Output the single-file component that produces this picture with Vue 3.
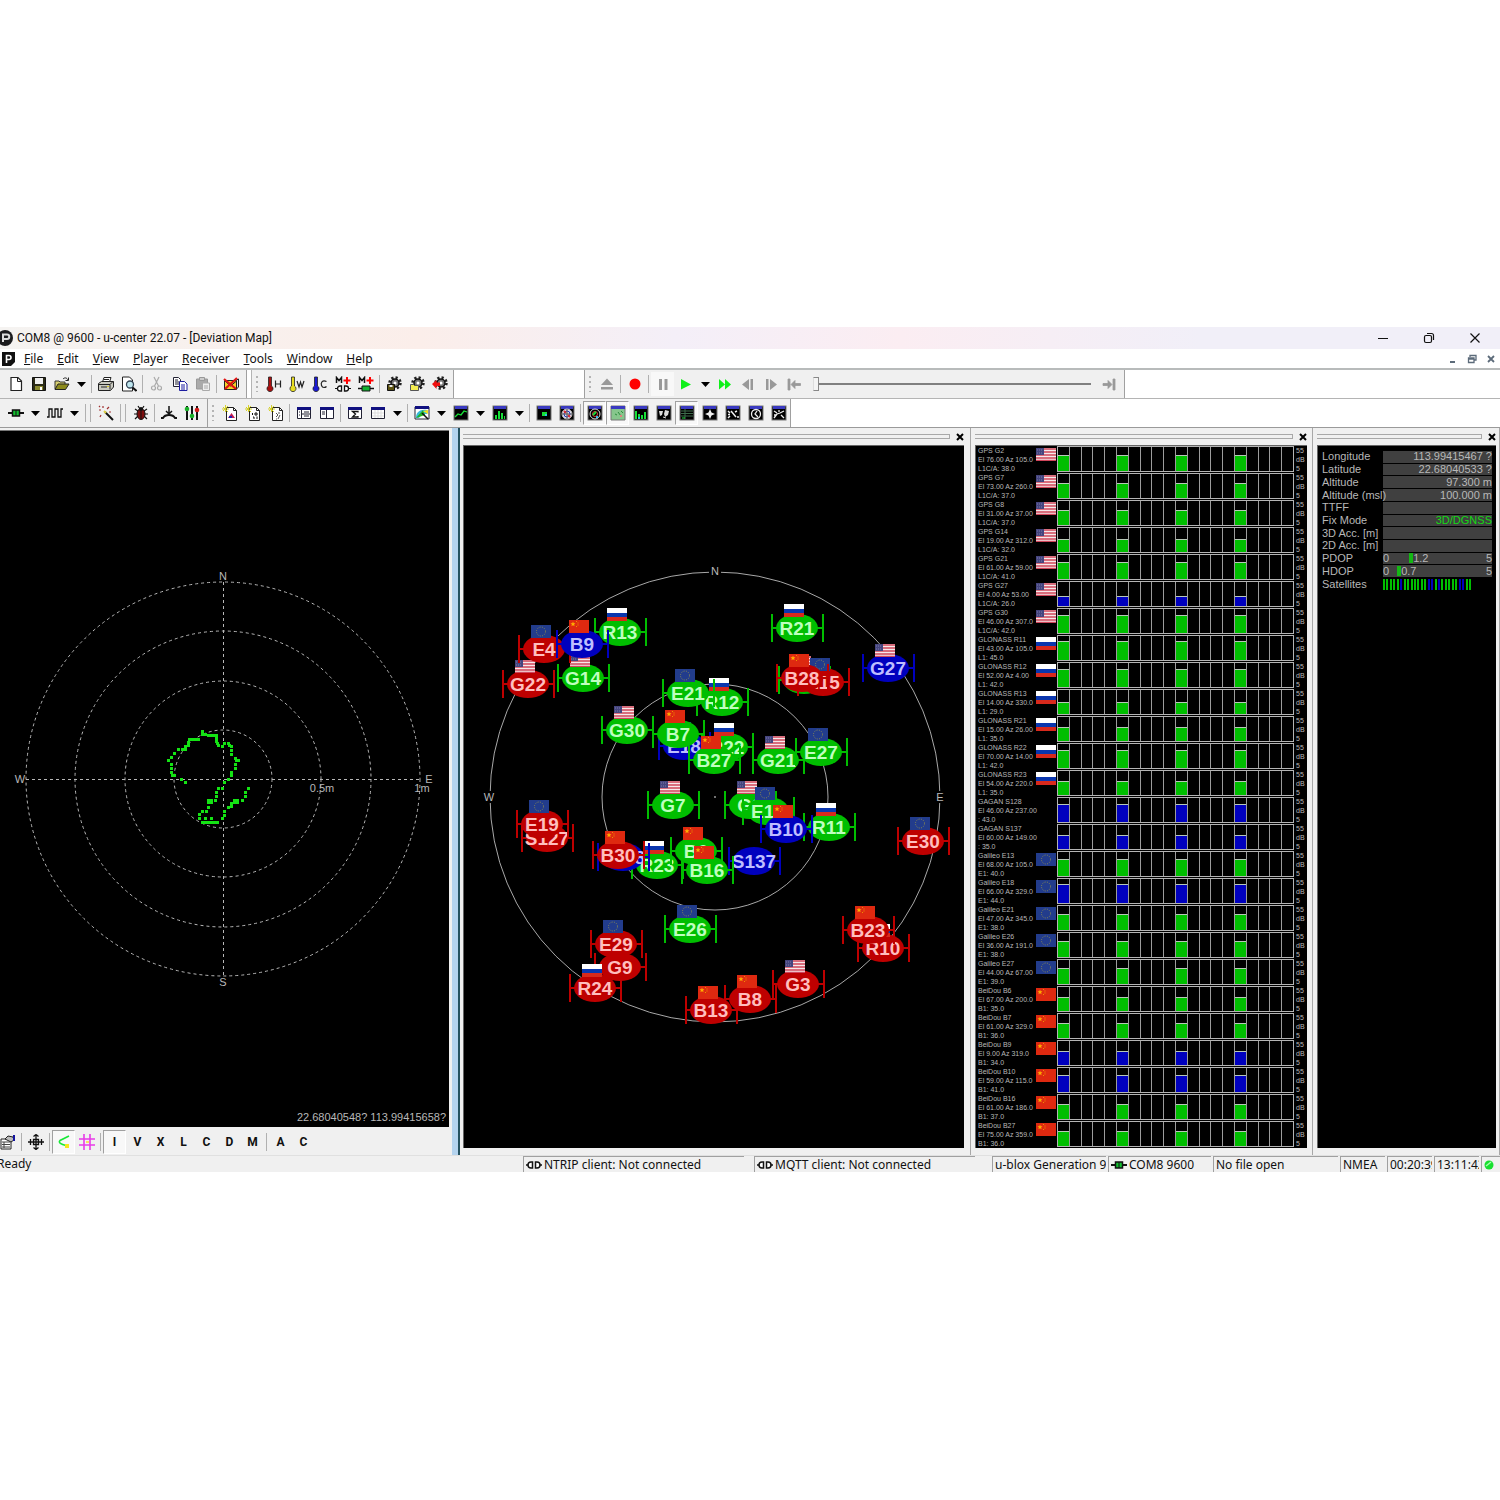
<script setup>
const svgWin = (inner) => `<rect x="1" y="1" width="14" height="14" fill="#000" stroke="#777" stroke-width="1"/><rect x="2" y="1" width="12" height="3" fill="#3a3ac0"/>${inner}`
const paneWin = (inner) => `<path d="M1.500 2.500h13v11h-13z" fill="#fff" stroke="#223"/><path d="M1 2h14v3h-14z" fill="#101080"/>${inner}`
const gear = '<circle cx="9" cy="7" r="5.500" fill="none" stroke="#222" stroke-width="2.500" stroke-dasharray="2.200 2.100"/><circle cx="9" cy="7" r="4" fill="#777" stroke="#111" stroke-width="1.500"/><circle cx="9" cy="7" r="1.500" fill="#fff"/>'
const thermo = (c, letter) => `<path d="M2.500 1h3v9a3 3 0 1 1-3 0z" fill="${c}" stroke="#222" stroke-width=".8"/><path d="${letter}" fill="none" stroke="#222" stroke-width="1.200"/>`
const memory = '<path d="M1.500 7V1.500l2.500 3 2.500-3V7" fill="none" stroke="#111" stroke-width="1.500"/><path d="M12 1v7M8.500 4.500h7" stroke="#f00" stroke-width="2"/>'
const logDoc = '<path d="M4.500 2.500h7l3 3v10h-10z" fill="#fff" stroke="#222"/><path d="M11.500 2.500v3h3" fill="none" stroke="#222"/><path d="M1 2l5 5M6 1L1 6M3.500 0v7M0 4h7" stroke="#d5d12a" stroke-width="1"/>'

const icons = {
  newDoc: '<path d="M3 1.500h7l3.500 3.500v9.500H3z" fill="#fff" stroke="#222" stroke-width="1.200"/><path d="M9.500 1.500v4h4" fill="none" stroke="#222"/>',
  save: '<path d="M1.500 1.500h13v13h-13z" fill="#2b2b16" stroke="#111"/><path d="M4 2h8v6h-8z" fill="#eee"/><path d="M4 10h8v4h-8z" fill="#8a8a30"/><path d="M9 11h2v3h-2z" fill="#fff"/>',
  open: '<path d="M1 13V5h4l1 1h5v2" fill="#d8d070" stroke="#333"/><path d="M1 13.500l3-5.500h11l-3.500 5.500z" fill="#8c8a1c" stroke="#222"/><path d="M9 3c2-2 4-1 5 1M14.500 1.500v3h-3" fill="none" stroke="#222"/>',
  print: '<path d="M4.500 6l1.500-4.500h7L11.500 6z" fill="#fff" stroke="#222"/><path d="M.5 7.500l3-2h12V11l-3 3.500H.5z" fill="#c9c9c0" stroke="#222"/><path d="M1 8.500h11v5M12 8.500l3-3M3 11h6M6 3.500h5" stroke="#222" fill="none"/><path d="M9 10h2v1h-2z" fill="#d4c822"/>',
  preview: '<path d="M1.500 1h7l3 3v11h-10z" fill="#fff" stroke="#222"/><circle cx="9" cy="8.500" r="3.500" fill="#bfe6ee" stroke="#345" stroke-width="1.300"/><path d="M11.500 11.500l4 3.500" stroke="#111" stroke-width="2"/>',
  cut: '<path d="M5 1l4.500 9M10 1L5.500 10" stroke="#aaa" stroke-width="1.200"/><circle cx="4.500" cy="12" r="2" fill="none" stroke="#aaa" stroke-width="1.200"/><circle cx="10.500" cy="12" r="2" fill="none" stroke="#aaa" stroke-width="1.200"/>',
  copy: '<path d="M1.500 1.500h5l2 2v7h-7z" fill="#fff" stroke="#223"/><path d="M3 4h3M3 6h4M3 8h4" stroke="#223"/><path d="M7.500 5.500h5l2.500 2.500v6.500h-7.500z" fill="#fff" stroke="#1c1ca0"/><path d="M9 9h4M9 11h4M9 13h4" stroke="#1c1ca0"/>',
  paste: '<path d="M1.500 3h11v10h-11z" fill="#aaa" stroke="#999"/><path d="M4.500 1.500h5v3h-5z" fill="#ccc" stroke="#999"/><path d="M7.500 7h7v7.500h-7z" fill="#eee" stroke="#aaa"/><path d="M9 10h4M9 12h4" stroke="#aaa"/>',
  mail: '<path d="M1.500 4.500h12v9h-12z" fill="#f5d327" stroke="#222"/><path d="M2 5l5.500 5 6-5M13.500 4l2-1v8l-2 2" fill="none" stroke="#222"/><path d="M1 3l12 10M14 2L2 13" stroke="#e01414" stroke-width="2.200"/>',
  hot: thermo('#a80f0f', 'M9.500 4.500v7M14.500 4.500v7M9.500 8h5'),
  warm: thermo('#e6dc20', 'M8 5l2 6 1.500-5 1.500 5 2-6'),
  cold: thermo('#1a1ad0', 'M14.500 5.500c-4-2-6 1-5 4s4 2 5 1'),
  memOff: memory + '<path d="M0 12.500h2M14 12.500h2" stroke="#111"/><path d="M6.500 10H5a2.500 2.500 0 0 0 0 5h1.500zM9.500 10H11a2.500 2.500 0 0 1 0 5H9.500z" fill="#fff" stroke="#111" stroke-width="1.300"/>',
  memOn: memory + '<path d="M0 12.500h16" stroke="#111" stroke-width="1.500"/><path d="M4 10h8v5h-8z" fill="#12b030" stroke="#111"/>',
  gearSave: gear + '<path d="M1.500 8.500h7v6h-7z" fill="#5c5310" stroke="#111"/><path d="M3.500 9h3v2h-3z" fill="#eee"/>',
  gearOpen: gear + '<path d="M1.500 8.500h3l1 1h4v5h-8z" fill="#f4ec50" stroke="#555"/>',
  gearRed: gear + '<path d="M0 8l4.500-4v2.500H8v3.500H4.500v3z" fill="#f01010"/>',
  eject: '<path d="M2 9l6-6.500L14 9zM2 11h12v2.500H2z" fill="#999"/>',
  record: '<circle cx="8" cy="8" r="5.500" fill="#f00"/>',
  pause: '<path d="M4 3h3v11H4zM9.500 3h3v11h-3z" fill="#999"/>',
  play: '<path d="M3 3l10 5.500L3 13.500z" fill="#0ff01a"/>',
  forward: '<path d="M2 3l6 5.500L2 13.500zM8 3l6 5.500-6 5z" fill="#0ff01a"/>',
  stepBack: '<path d="M9 3v11L2 8.500zM10.500 3h2.500v11h-2.500z" fill="#999"/>',
  stepNext: '<path d="M7 3v11l7-5.500zM3 3h2.500v11H3z" fill="#999"/>',
  toStart: '<path d="M2 3h2v11H2zM5 8.500l4-4v3h5.500v2H9v3z" fill="#999" stroke="#999" stroke-width=".8"/>',
  toEnd: '<path d="M12 3h2v11h-2zM11 8.500l-4-4v3H2v2h5v3z" fill="#999" stroke="#999" stroke-width=".8"/>',
  connect: '<path d="M0 8h16" stroke="#111" stroke-width="2"/><path d="M4.500 5h7v6h-7z" fill="#12c030" stroke="#111" stroke-width="1.500"/><path d="M8 5v6" stroke="#111"/>',
  wave: '<path d="M0 12h2V4h3v8h3V4h3v8h3V4h2" fill="none" stroke="#111" stroke-width="1.300"/>',
  wand: '<path d="M7 7l8 8" stroke="#111" stroke-width="2"/><path d="M5 1v2M1 5h2M9 4l2-2M3 10l-1 2M1 1l1 1M11 7h2" stroke="#a03030" stroke-width="1.200"/><path d="M6 6l2 2" stroke="#e0d040" stroke-width="2"/>',
  bug: '<path d="M2 4l3 2M14 4l-3 2M1 9h14M2 14l3-3M14 14l-3-3M5 1l2 3M11 1L9 4" stroke="#111" stroke-width="1.200"/><ellipse cx="8" cy="9" rx="4" ry="5.500" fill="#7c0d0d" stroke="#111"/><circle cx="8" cy="4" r="2" fill="#111"/><path d="M8 6v8" stroke="#111"/>',
  base: '<path d="M8 1v8M5 6l3 3 3-3" fill="none" stroke="#111" stroke-width="1.500"/><path d="M0 13h2c2-4 10-4 12 0h2" fill="none" stroke="#111" stroke-width="1.800"/>',
  sliders: '<path d="M3 1v14M8 1v14M13 1v14" stroke="#111" stroke-width="2"/><circle cx="3" cy="4" r="2.300" fill="#18b028"/><circle cx="8" cy="11" r="2.300" fill="#18b028"/><circle cx="13" cy="5" r="2.300" fill="#d01818"/>',
  logImage: logDoc + '<path d="M6 13l3.500-5 3.500 5z" fill="#c01850"/><path d="M7 11h3v2H7z" fill="#2020b0"/>',
  logBits: logDoc + '<path d="M7.500 8v2M10 8h2v2h-2zM8 12h1v2M12 11.500v2.500" fill="none" stroke="#111"/>',
  logText: logDoc + '<path d="M8 8l2 2-2 2M11 7v2M12 10l-2 4M8 14h1" fill="none" stroke="#555"/>',
  paneList: paneWin('<path d="M5.500 5v8M6 9h8M8 7h5M8 11h5M3 7h1M3 10h1" stroke="#223"/>'),
  paneText: paneWin('<path d="M7.500 5v8M3 7h3M3 9h3" stroke="#223"/>'),
  sum: paneWin('<path d="M11 7.500V6.500H5.500L8.500 9 5.500 12H11v-1" fill="none" stroke="#111" stroke-width="1.300"/>'),
  grid: paneWin('<path d="M5 5v8M8 5v8M11 5v8M2 8h12M2 11h12" stroke="#ddd"/>'),
  gauge: '<path d="M1 2h14v12H1z" fill="#fff" stroke="#223"/><path d="M1 1h14v3H1z" fill="#101080"/><path d="M2 13c0-6 4-9 11-8v4H8l-3 4z" fill="#38b8d8"/><path d="M2 13L9 5l2 5z" fill="#21b421"/><path d="M9 6l5-1v4z" fill="#f4e020"/><path d="M8 8l6 6" stroke="#111" stroke-width="1.500"/>',
  lineChart: svgWin('<path d="M2 12l3-3 3 1 3-4 3 1" fill="none" stroke="#18e038" stroke-width="1.300"/>'),
  histogram: svgWin('<path d="M3 14v-4h2v4zM6 14V6h2v8zM9 14V8h2v6zM12 14v-3h1v3z" fill="#18e038"/>'),
  mapDot: svgWin('<path d="M6 7h5v4H6z" fill="#18e038"/><path d="M9 9h2v2H9z" fill="#28c8e0"/>'),
  skyIcon: svgWin('<circle cx="8" cy="9" r="5" fill="#dde" stroke="#bbb"/><circle cx="8" cy="9" r="3" fill="none" stroke="#2030c0"/><path d="M5 6l2 2M11 12l-2-2" stroke="#e03030" stroke-width="2"/><path d="M8 4v10M3 9h10" stroke="#555"/>'),
  sky2: svgWin('<circle cx="8" cy="9" r="5" fill="none" stroke="#ddd"/><circle cx="8" cy="9" r="2.500" fill="none" stroke="#e04040"/><path d="M6 10l3-3" stroke="#18e038" stroke-width="1.800"/><path d="M9 11h2v2H9z" fill="#38b8f0"/>'),
  signal2: '<path d="M1 1h14v14H1z" fill="#86c68c" stroke="#777"/><path d="M1 1h14v3H1z" fill="#3a3ac0"/><path d="M8 7l3 4M5 9l2 1M11 6l2 2" stroke="#2c8c3c"/><path d="M10 10h2v2h-2z" fill="#e08080"/>',
  bars2: svgWin('<path d="M2 14V6h2v8zM5 14V9h2v5zM8 14v-4h2v4zM11 14V7h2v7z" fill="#18e038"/><path d="M5 12h2v2H5z" fill="#28c8e0"/>'),
  world: svgWin('<path d="M3 6h4l-1 4-2 1zM9 5l4 1-1 4-3 2-1-3z" fill="#ddd"/><path d="M7 12l3 1" stroke="#ddd"/>'),
  dataView: svgWin('<path d="M2 6h12M2 8.500h12M2 11h12M6 4v10" stroke="#3d6a4a"/><path d="M3 13h3" stroke="#18e038"/>'),
  compass: svgWin('<path d="M8 4l1.500 3.500L13 9l-3.500 1.500L8 14l-1.500-3.500L3 9l3.500-1.500z" fill="#eee"/>'),
  speed: svgWin('<path d="M3 13l2-2M3 6l2 2M12 6l-2 1M6 6l5 6M12 12h2M3 9.500h2" stroke="#eee" stroke-width="1.500"/>'),
  clock: svgWin('<circle cx="8" cy="9" r="4.500" fill="none" stroke="#eee" stroke-width="1.300"/><path d="M9 6L7 9l3 3" fill="none" stroke="#eee" stroke-width="1.300"/>'),
  altitude: svgWin('<path d="M3 13l3-4 3-1 4-2M3 6l3 2M10 10l3 3M8 5v2M3 10h2" fill="none" stroke="#eee" stroke-width="1.300"/>'),
  props: '<path d="M1 5h10v10H1z" fill="#fff" stroke="#222"/><path d="M2 8h8M2 10.500h8M2 13h8M4 8v6" stroke="#444"/><path d="M5 5l3-3 5 1 1 3-3 2z" fill="#bbb" stroke="#222"/><path d="M13 1h2v6h-2z" fill="#1414a0"/>',
  move: '<path d="M8 0v16M0 8h16M5.500 2.500L8 .5l2.500 2M5.500 13.500l2.500 2 2.500-2M2.500 5v6M13.500 5v6M5.500 5.500h5v5h-5z" fill="none" stroke="#111" stroke-width="1.300"/>',
  track: '<path d="M13 2L4 6.500c-2 2 1 4 6 5" fill="none" stroke="#18e838" stroke-width="1.600"/><path d="M9 10h4v4H9z" fill="#f4e820"/>',
  hash: '<path d="M5 0v16M11 0v16M0 5h16M0 11h16" stroke="#e83ae8" stroke-width="1.600"/><path d="M7 7h3v2H7z" fill="#f8e060"/>',
  unplugged: '<path d="M0 8h2M14 8h2" stroke="#111" stroke-width="1.500"/><path d="M6.500 5H5a3 3 0 0 0 0 6h1.500zM9.500 5H11a3 3 0 0 1 0 6H9.500z" fill="#fff" stroke="#111" stroke-width="1.500"/>'
}

const b = (icon, label, pressed = false) => ({ t: 'b', icon, label, pressed })
const drop = (label) => ({ t: 'd', label })
const sep = { t: 's' }
const dbl = { t: 'ss' }

const fileBar = [b('newDoc', 'New'), b('save', 'Save'), b('open', 'Open'), drop('Recent files'), sep, b('print', 'Print'), b('preview', 'Print preview'), sep, b('cut', 'Cut'), b('copy', 'Copy'), b('paste', 'Paste'), sep, b('mail', 'Clear messages')]
const actionBar = [b('hot', 'Hotstart'), b('warm', 'Warmstart'), b('cold', 'Coldstart'), b('memOff', 'Memory disconnect'), b('memOn', 'Memory connect'), sep, b('gearSave', 'Save configuration'), b('gearOpen', 'Load configuration'), b('gearRed', 'Revert configuration')]
const playerBar = [b('eject', 'Eject'), sep, b('record', 'Record'), sep, b('pause', 'Pause', true), b('play', 'Play'), drop('Play speed'), b('forward', 'Fast forward'), b('stepBack', 'Step back'), b('stepNext', 'Step forward'), b('toStart', 'Go to start')]
const connBar = [b('connect', 'Connect'), drop('Port'), b('wave', 'Baudrate'), drop('Baudrate list'), dbl, b('wand', 'Autobauding'), dbl, b('bug', 'Debug messages'), sep, b('base', 'Base station'), b('sliders', 'Settings')]
const viewBar = [b('logImage', 'Packet console'), b('logBits', 'Binary console'), b('logText', 'Text console'), sep, b('paneList', 'Messages view'), b('paneText', 'Configuration view'), sep, b('sum', 'Statistic view'), b('grid', 'Table view'), drop('Table list'), sep, b('gauge', 'Map'), drop('Map list'), b('lineChart', 'Chart view'), drop('Chart list'), b('histogram', 'Histogram view'), drop('Histogram list'), sep, b('mapDot', 'Deviation map'), b('skyIcon', 'Sky view'), sep, b('sky2', 'Satellite position', true), b('signal2', 'Satellite signal history', true), b('bars2', 'Satellite level'), b('world', 'World position'), b('dataView', 'Data view', true), b('compass', 'Compass'), b('speed', 'Speedometer'), b('clock', 'Clock'), b('altitude', 'Altitude meter')]
const menus = ['File', 'Edit', 'View', 'Player', 'Receiver', 'Tools', 'Window', 'Help']
const letters = ['I', 'V', 'X', 'L', 'C', 'D', 'M']

const rings = [49, 98, 148, 197]
const trail = [
  [-21, -48], [-21, -45], [-18, -45], [-15, -44], [-12, -44], [-9, -44], [-7, -44], [-7, -41], [-7, -38], [-6, -36], [-5, -34], [-1, -33], [1, -36], [5, -36], [6, -34], [8, -33], [8, -29], [8, -25], [12, -21], [13, -19], [15, -19], [12, -15], [12, -11], [8, -7], [8, -4], [5, 0], [1, 3], [-1, 9], [-5, 9], [-7, 13], [-7, 17], [-8, 21], [-15, 28], [-17, 32], [-21, 32], [-24, 35], [-24, 39], [-18, 39], [-12, 39], [-21, 43], [-18, 43], [-15, 43], [-12, 43], [-9, 43], [-6, 43], [-1, 39], [1, 36], [1, 32], [5, 28], [8, 27], [8, 24], [19, 21], [22, 17], [22, 13], [25, 9],
  [-25, -40], [-28, -40], [-31, -40], [-34, -40], [-35, -37], [-35, -34], [-38, -33], [-38, -30], [-41, -30], [-45, -30], [-49, -26], [-52, -22], [-55, -19], [-52, -15], [-52, -11], [-52, -7], [-51, -4], [-49, -4], [-42, 0], [-38, 3]
]
const clusters = [[-13, 23], [13, 23]]

const sats = [
  ['G2', 750, 805, 'g'], ['G3', 798, 984, 'r'], ['G7', 673, 805, 'g'], ['G8', 804, 680, 'g'], ['G9', 620, 967, 'r'], ['G14', 583, 678, 'g'], ['G21', 778, 760, 'g'], ['G22', 528, 684, 'r'], ['G27', 888, 668, 'b'], ['G30', 627, 730, 'g'],
  ['R10', 883, 948, 'r'], ['R11', 829, 827, 'g'], ['R12', 722, 702, 'g'], ['R13', 620, 632, 'g'], ['R21', 797, 628, 'g'], ['R22', 727, 747, 'g'], ['R23', 657, 865, 'g'], ['R24', 595, 988, 'r'],
  ['S127', 547, 838, 'r'], ['S128', 623, 857, 'b'], ['S137', 754, 861, 'b'],
  ['E4', 544, 649, 'r'], ['E13', 768, 811, 'g'], ['E15', 823, 682, 'r'], ['E18', 684, 746, 'b'], ['E19', 542, 824, 'r'], ['E21', 688, 693, 'g'], ['E26', 690, 929, 'g'], ['E27', 821, 752, 'g'], ['E29', 616, 944, 'r'], ['E30', 923, 841, 'r'],
  ['B6', 696, 851, 'g'], ['B7', 678, 734, 'g'], ['B8', 750, 999, 'r'], ['B9', 582, 644, 'b'], ['B10', 786, 829, 'b'], ['B13', 711, 1010, 'r'], ['B16', 707, 870, 'g'], ['B23', 868, 930, 'r'], ['B27', 714, 760, 'g'], ['B28', 802, 678, 'r'], ['B30', 618, 855, 'r']
].map(([id, x, y, tone]) => ({ id, x: x - 715, y: y - 797, tone, flag: flagOf(id) }))

function flagOf(id) {
  return { G: 'us', R: 'ru', E: 'eu', B: 'cn' }[id[0]]
}

const systems = { G: ['GPS', 'L1C/A'], R: ['GLONASS', 'L1'], S: ['GAGAN', ''], E: ['Galileo', 'E1'], B: ['BeiDou', 'B1'] }
const signals = [
  ['G2', '76.00', '105.0', 38], ['G7', '73.00', '260.0', 37], ['G8', '31.00', '37.00', 37], ['G14', '19.00', '312.0', 32], ['G21', '61.00', '59.00', 41], ['G27', '4.00', '53.00', 26, 1], ['G30', '46.00', '307.0', 42],
  ['R11', '43.00', '105.0', 45], ['R12', '52.00', '4.00', 42], ['R13', '14.00', '330.0', 29], ['R21', '15.00', '26.00', 35], ['R22', '70.00', '14.00', 42], ['R23', '54.00', '220.0', 35],
  ['S128', '46.00', '237.00', 43, 1], ['S137', '60.00', '149.00', 35, 1],
  ['E13', '68.00', '105.0', 40], ['E18', '66.00', '329.0', 44, 1], ['E21', '47.00', '345.0', 38], ['E26', '36.00', '191.0', 38], ['E27', '44.00', '67.00', 39],
  ['B6', '67.00', '200.0', 35], ['B7', '61.00', '329.0', 36], ['B9', '9.00', '319.0', 34, 1], ['B10', '59.00', '115.0', 41, 1], ['B16', '61.00', '186.0', 37], ['B27', '75.00', '359.0', 36]
].map(([id, el, az, level, blue]) => ({
  id,
  name: `${systems[id[0]][0]} ${id}`,
  angle: `El ${el} Az ${az}`,
  reading: `${systems[id[0]][1]}: ${level}.0`,
  height: (level - 5) * 2 + '%',
  blue: !!blue,
  flag: flagOf(id)
}))

const info = [['Longitude', '113.99415467 ?'], ['Latitude', '22.68040533 ?'], ['Altitude', '97.300 m'], ['Altitude (msl)', '100.000 m'], ['TTFF', ''], ['Fix Mode', '3D/DGNSS'], ['3D Acc. [m]', ''], ['2D Acc. [m]', '']]
const dops = [['PDOP', 1.2], ['HDOP', 0.7]]
</script>

<template>
  <div class="page">
    <svg class="defs" aria-hidden="true">
      <symbol id="flag-us" viewBox="0 0 20 13">
        <path d="M0 0h20v13H0z" fill="#f6e8ea" />
        <path d="M0 1h20M0 4h20M0 7h20M0 10h20M0 12.500h20" stroke="#d0455a" stroke-width="1.300" />
        <path d="M0 0h8v7H0z" fill="#45457e" />
        <path d="M1 2h6M1 5h6" stroke="#7a7aaa" stroke-dasharray="1 1" />
      </symbol>
      <symbol id="flag-ru" viewBox="0 0 20 13">
        <path d="M0 0h20v5H0z" fill="#fff" />
        <path d="M0 5h20v4H0z" fill="#0a36ae" />
        <path d="M0 9h20v4H0z" fill="#d8291c" />
      </symbol>
      <symbol id="flag-eu" viewBox="0 0 20 13">
        <path d="M0 0h20v13H0z" fill="#223c8c" />
        <circle cx="10" cy="6.500" r="4.500" fill="none" stroke="#8c8c50" stroke-width="1" stroke-dasharray="1 1.400" />
      </symbol>
      <symbol id="flag-cn" viewBox="0 0 20 13">
        <path d="M0 0h20v13H0z" fill="#de2910" />
        <path d="M4 1.500l.7 1.700 1.800.1-1.400 1.200.5 1.800L4 5.300l-1.600 1 .5-1.800-1.400-1.200 1.800-.1z" fill="#ffb000" />
        <path d="M7 1.500h1M8.500 3h1M8.500 5h1M7 6.500h1" stroke="#f09000" />
      </symbol>
    </svg>

    <main class="app">
      <header class="titlebar">
        <svg class="app-logo" viewBox="0 0 16 16"><circle cx="7" cy="8" r="8" fill="#1c1c1e" /><path d="M5 12V4.500h4a2.200 2.200 0 0 1 0 4.500H6" fill="none" stroke="#ddd" stroke-width="2" /></svg>
        <h1>COM8 @ 9600 - u-center 22.07 - [Deviation Map]</h1>
        <button class="win" aria-label="Minimize"><svg viewBox="0 0 12 12"><path d="M1 6.500h10" stroke="#111" /></svg></button>
        <button class="win" aria-label="Restore"><svg viewBox="0 0 12 12"><rect x="1.500" y="3.500" width="7" height="7" rx="1.500" fill="none" stroke="#111" stroke-width="1.200" /><path d="M4 1.500h4.500a2 2 0 0 1 2 2V8" fill="none" stroke="#111" stroke-width="1.200" /></svg></button>
        <button class="win" aria-label="Close"><svg viewBox="0 0 12 12"><path d="M1.500 1.500l9 9M10.500 1.500l-9 9" stroke="#111" stroke-width="1.200" /></svg></button>
      </header>

      <nav class="menubar">
        <svg class="doc-logo" viewBox="0 0 13 14"><path d="M0 0h13v10l-4 4H0z" fill="#111" /><path d="M4.500 11V3.500h2.500a2 2 0 0 1 0 4H5" fill="none" stroke="#fff" stroke-width="1.600" /></svg>
        <button v-for="m in menus" :key="m"><u>{{ m[0] }}</u>{{ m.slice(1) }}</button>
        <span class="spacer"></span>
        <button class="mdi" aria-label="Minimize map"><svg viewBox="0 0 10 10"><path d="M2 8h5" stroke="#5c6b7a" stroke-width="2" /></svg></button>
        <button class="mdi" aria-label="Restore map"><svg viewBox="0 0 10 10"><path d="M3 3V1.500h6V6H7.500M1.500 4h5.500v4.500H1.500zM1.500 5h5.500" fill="none" stroke="#5c6b7a" stroke-width="1.300" /></svg></button>
        <button class="mdi" aria-label="Close map"><svg viewBox="0 0 10 10"><path d="M2 2l6 6M8 2L2 8" stroke="#5c6b7a" stroke-width="1.800" /></svg></button>
      </nav>

      <div class="toolrow">
        <div v-for="(bar, n) in [fileBar, actionBar, playerBar]" :key="n" class="toolbar" :class="['bar-' + n]">
          <i v-if="n" class="grip"></i>
          <template v-for="(it, i) in bar" :key="i">
            <button v-if="it.t === 'b'" class="tool" :class="{ pressed: it.pressed }" :aria-label="it.label"><svg viewBox="0 0 16 16" v-html="icons[it.icon]"></svg></button>
            <button v-else-if="it.t === 'd'" class="drop" :aria-label="it.label"><svg viewBox="0 0 9 5"><path d="M0 0h9L4.500 5z" /></svg></button>
            <i v-else class="sep"></i>
          </template>
          <template v-if="n === 2">
            <input class="seek" type="range" min="0" max="100" value="0" aria-label="Player position" />
            <button class="tool" aria-label="Go to end"><svg viewBox="0 0 16 16" v-html="icons.toEnd"></svg></button>
          </template>
        </div>
      </div>

      <div class="toolrow second">
        <div v-for="(bar, n) in [connBar, viewBar]" :key="n" class="toolbar" :class="['view-' + n]">
          <i v-if="n" class="grip"></i>
          <template v-for="(it, i) in bar" :key="i">
            <button v-if="it.t === 'b'" class="tool" :class="{ pressed: it.pressed }" :aria-label="it.label"><svg viewBox="0 0 16 16" v-html="icons[it.icon]"></svg></button>
            <button v-else-if="it.t === 'd'" class="drop" :aria-label="it.label"><svg viewBox="0 0 9 5"><path d="M0 0h9L4.500 5z" /></svg></button>
            <i v-else class="sep" :class="{ double: it.t === 'ss' }"></i>
          </template>
        </div>
      </div>

      <div class="workspace">
        <section class="deviation">
          <div class="map">
            <svg viewBox="0 0 449 696">
              <g class="polar" transform="translate(223 348)">
                <circle v-for="r in rings" :key="r" :r="r" />
                <path d="M-197 .5H197M.5-197V197" />
              </g>
              <g class="trail" transform="translate(223 348)">
                <rect v-for="(p, i) in trail" :key="i" :x="p[0] - 1" :y="p[1] - 1" width="3" height="3" />
                <rect v-for="(p, i) in clusters" :key="'c' + i" :x="p[0] - 3" :y="p[1] - 3" width="6" height="5" />
              </g>
              <g class="mark">
                <text x="223" y="149">N</text>
                <text x="223" y="555">S</text>
                <text x="20" y="352">W</text>
                <text x="429" y="352">E</text>
                <text x="322" y="361">0.5m</text>
                <text x="422" y="361">1m</text>
                <text x="446" y="690" class="coords">22.68040548? 113.99415658?</text>
              </g>
            </svg>
          </div>
          <div class="map-tools">
            <button class="tool" aria-label="Properties"><svg viewBox="0 0 16 16" v-html="icons.props"></svg></button><i class="sep"></i>
            <button class="tool" aria-label="Center"><svg viewBox="0 0 16 16" v-html="icons.move"></svg></button><i class="sep"></i>
            <button class="tool pressed" aria-label="Track"><svg viewBox="0 0 16 16" v-html="icons.track"></svg></button>
            <button class="tool" aria-label="Grid"><svg viewBox="0 0 16 16" v-html="icons.hash"></svg></button><i class="sep"></i>
            <button v-for="l in letters" :key="l" class="tool letter" :class="{ pressed: l === 'I' }">{{ l }}</button><i class="sep"></i>
            <button class="tool letter">A</button>
            <button class="tool letter">C</button>
          </div>
        </section>

        <section class="dock">
          <header><i class="handle"></i><button aria-label="Close sky view"><svg viewBox="0 0 8 8"><path d="M1 1l6 6M7 1L1 7" /></svg></button></header>
          <div class="screen">
            <svg class="sky" viewBox="0 0 500 701">
              <g transform="translate(251 351)">
                <circle class="horizon" r="225" />
                <circle class="horizon" r="113" />
                <circle r="1" fill="#999" />
                <g class="mark">
                  <rect x="-6" y="-231" width="12" height="12" /><text y="-222">N</text>
                  <rect x="-231" y="-6" width="12" height="12" /><text x="-226" y="4">W</text>
                  <rect x="219" y="-6" width="12" height="12" /><text x="225" y="4">E</text>
                </g>
                <g v-for="s in sats" :key="s.id" :class="['sat', s.tone]" :transform="`translate(${s.x} ${s.y})`">
                  <path d="M-25-14V14M26-14V14M-25 0H26" />
                  <ellipse rx="21" ry="14" />
                  <use v-if="s.flag" :href="'#flag-' + s.flag" x="-13" y="-24" width="20" height="13" />
                  <text y="7">{{ s.id }}</text>
                </g>
              </g>
            </svg>
          </div>
        </section>

        <section class="dock">
          <header><i class="handle"></i><button aria-label="Close signal history"><svg viewBox="0 0 8 8"><path d="M1 1l6 6M7 1L1 7" /></svg></button></header>
          <div class="screen">
            <div v-for="s in signals" :key="s.id" class="signal">
              <div class="sig-text"><p>{{ s.name }}</p><p>{{ s.angle }}</p><p>{{ s.reading }}</p></div>
              <svg class="flag" viewBox="0 0 20 13"><use v-if="s.flag" :href="'#flag-' + s.flag" width="20" height="13" /></svg>
              <div class="history">
                <div v-for="c in 20" :key="c" class="cell"><div v-if="c % 5 === 1" class="level" :class="{ blue: s.blue }" :style="{ height: s.height }"></div></div>
              </div>
              <div class="scale"><p>55</p><p>dB</p><p>5</p></div>
            </div>
          </div>
        </section>

        <section class="dock">
          <header><i class="handle"></i><button aria-label="Close data view"><svg viewBox="0 0 8 8"><path d="M1 1l6 6M7 1L1 7" /></svg></button></header>
          <div class="screen">
            <table class="info">
              <tbody>
                <tr v-for="[k, v] in info" :key="k"><th scope="row">{{ k }}</th><td :class="{ fix: k === 'Fix Mode' }">{{ v }}</td></tr>
                <tr v-for="[k, v] in dops" :key="k">
                  <th scope="row">{{ k }}</th>
                  <td><div class="dop"><span class="zero">0</span><span class="dop-value" :style="{ paddingLeft: v * 22 - 8 + '%' }"><i></i>{{ v }}</span><span>5</span></div></td>
                </tr>
                <tr><th scope="row">Satellites</th><td class="strip-cell"><div class="strip"><i v-for="s in signals" :key="s.id" :class="{ blue: s.blue }"></i></div></td></tr>
              </tbody>
            </table>
          </div>
        </section>
      </div>

      <footer class="status">
        <span class="ready">Ready</span>
        <span class="cell-s client"><svg viewBox="0 0 16 16" v-html="icons.unplugged"></svg>NTRIP client: Not connected</span>
        <span class="cell-s client mqtt"><svg viewBox="0 0 16 16" v-html="icons.unplugged"></svg>MQTT client: Not connected</span>
        <span class="cell-s generation">u-blox Generation 9</span>
        <span class="cell-s port"><svg viewBox="0 0 16 16" v-html="icons.connect"></svg>COM8 9600</span>
        <span class="cell-s file">No file open</span>
        <span class="cell-s time">NMEA</span>
        <span class="cell-s time">00:20:39</span>
        <span class="cell-s time">13:11:42</span>
        <span class="cell-s lamp"><svg viewBox="0 0 10 10"><circle cx="5" cy="5" r="4.500" fill="#18e030" /><path d="M2 6l5-4" stroke="#a8ffb0" stroke-width="1.500" /></svg></span>
      </footer>
    </main>
  </div>
</template>

<style>
body {
  margin: 0;
  background: #fff;
}
</style>

<style scoped>
* {
  box-sizing: border-box;
}
.page {
  padding: 327px 0;
  font: 12px/16px "Noto Sans", "Open Sans", sans-serif;
  color: #111;
  overflow: hidden;
}
.defs {
  position: absolute;
  width: 0;
  height: 0;
}
p, h1 {
  margin: 0;
}
button {
  padding: 0;
  border: 0;
  background: none;
  font: inherit;
  color: inherit;
}
svg {
  display: block;
}
.titlebar {
  display: flex;
  align-items: center;
  height: 22px;
  background: linear-gradient(90deg, #f5f3f1, #fbeeea 28%, #f4eff8 45%, #fbedf2 60%, #f1eff8 80%);
}
.app-logo {
  width: 16px;
  height: 16px;
  margin-left: -2px;
}
.titlebar h1 {
  flex: 1;
  margin-left: 3px;
  font-family: Roboto, "Open Sans", sans-serif;
  font-size: 12px;
  font-weight: 400;
}
.win {
  display: flex;
  justify-content: center;
  width: 46px;
}
.win svg {
  width: 12px;
  height: 12px;
}
.win:last-child {
  margin-right: 2px;
}
.menubar {
  display: flex;
  align-items: center;
  gap: 14px;
  height: 21px;
  border-bottom: 2px solid #b8bbbb;
  background: #fff;
}
.doc-logo {
  width: 13px;
  height: 14px;
  margin: 0 -5px 0 2px;
}
.spacer {
  flex: 1;
}
.mdi {
  margin-left: -5px;
}
.mdi svg {
  width: 10px;
  height: 10px;
}
.menubar button:last-child {
  margin-right: 4px;
}
.toolrow {
  display: flex;
  height: 29px;
  border-bottom: 1px solid #b4b4b4;
}
.toolrow.second {
  border-bottom-color: #9a9a9a;
}
.toolbar {
  display: flex;
  align-items: center;
  border-right: 1px solid #a0a0a0;
  background: #f0f0f0;
}
.bar-0 {
  padding: 0 4px;
}
.bar-1 {
  margin-left: 4px;
  padding-right: 2px;
  border-left: 1px solid #b4b4b4;
}
.bar-2 {
  flex: 0 1 541px;
  margin-left: 130px;
  padding-right: 4px;
  border-left: 1px solid #a0a0a0;
}
.view-0 {
  padding: 0 4px;
}
.grip {
  align-self: stretch;
  flex: none;
  width: 2px;
  margin: 6px 4px;
  background: repeating-linear-gradient(#b4b4b4 0 2px, transparent 2px 5px);
}
.tool {
  display: flex;
  align-items: center;
  justify-content: center;
  flex: none;
  width: 23px;
  height: 24px;
}
.tool svg {
  width: 16px;
  height: 16px;
}
.tool.pressed {
  border: 1px solid #fff;
  border-top-color: #a0a0a0;
  border-left-color: #a0a0a0;
  background: #f8f8f8;
}
.bar-2 .tool.pressed {
  border-color: #f8f8f8;
}
.drop {
  display: flex;
  justify-content: center;
  flex: none;
  width: 16px;
}
.drop svg {
  width: 9px;
  height: 5px;
}
.sep {
  flex: none;
  width: 1px;
  height: 18px;
  margin: 0 2px;
  background: #b0b0b0;
}
.sep.double {
  width: 6px;
  margin: 0 3px;
  border: 1px solid #b0b0b0;
  border-width: 0 1px;
  background: none;
}
.seek {
  flex: 1;
  min-width: 0;
  height: 16px;
  margin: 0 6px 0 8px;
  appearance: none;
  background: linear-gradient(#808080, #808080) 0 50% / 100% 2px no-repeat;
}
.seek::-webkit-slider-thumb {
  appearance: none;
  width: 6px;
  height: 14px;
  border: 1px solid #888;
  border-left-color: #ddd;
  background: #f4f4f4;
}
.workspace {
  display: grid;
  grid-template-columns: 460fr 511fr 342fr 187fr;
  background: #f0f0f0;
}
.deviation {
  min-width: 0;
  padding-top: 2px;
  border-right: 2px solid #24515f;
  background: linear-gradient(90deg, #f0f0f0 calc(100% - 6px), #b4d3ee 0);
}
.map {
  margin-right: 9px;
  border-top: 1px solid #777;
  background: #000;
}
.map svg {
  width: 100%;
}
.map-tools {
  display: flex;
  align-items: center;
  height: 26px;
  margin: 2px 6px 0 -4px;
}
.letter {
  font: 700 12px/16px Roboto, "Liberation Sans", sans-serif;
}
.polar circle, .polar path {
  fill: none;
  stroke: #b8b8b8;
  stroke-width: 1;
  stroke-dasharray: 3 3;
}
.trail {
  fill: #14e314;
}
.mark {
  fill: #b8b8b8;
  font: 11px "Liberation Sans", sans-serif;
  text-anchor: middle;
}
.mark .coords {
  text-anchor: end;
}
.mark rect {
  fill: #000;
}
.dock {
  display: flex;
  flex-direction: column;
  min-width: 0;
  padding: 0 6px 7px 3px;
  border-right: 1px solid #a8a8a8;
}
.dock + .dock {
  padding-left: 4px;
  padding-right: 5px;
}
.dock:last-child {
  padding-right: 3px;
}
.dock header {
  display: flex;
  align-items: center;
  height: 17px;
}
.handle {
  flex: 1;
  height: 5px;
  margin-right: 6px;
  border: 1px solid #a8a8a8;
  border-left: 0;
}
.dock header svg {
  width: 8px;
  height: 8px;
  stroke: #000;
  stroke-width: 2;
}
.screen {
  flex: 1;
  border-top: 1px solid #666;
  border-left: 1px solid #666;
  background: #000;
}
.sky {
  width: 100%;
}
.horizon {
  fill: none;
  stroke: #a8a8a8;
}
.sat path {
  stroke-width: 2;
}
.sat text {
  font: 700 19px "Liberation Sans", sans-serif;
  text-anchor: middle;
}
.g { fill: #00be00; stroke: #00be00; }
.r { fill: #be0000; stroke: #be0000; }
.b { fill: #0000be; stroke: #0000be; }
.sat ellipse, .sat text, .sat use {
  stroke: none;
}
.g text { fill: #beffbe; }
.r text { fill: #ffbebe; }
.b text { fill: #bebeff; }
.signal {
  display: flex;
  height: 27px;
  color: #b8b8b8;
  font: 7px/9px "Liberation Sans", sans-serif;
}
.sig-text {
  width: 60px;
  padding-left: 2px;
  white-space: nowrap;
}
.flag {
  flex: none;
  width: 20px;
  height: 13px;
  margin: 2px 1px 0 0;
}
.history {
  display: flex;
  flex: 1;
  height: 26px;
  border: 1px solid #b4b4b4;
}
.cell {
  display: flex;
  align-items: flex-end;
  flex: 1;
  border-right: 1px solid #9c9c9c;
}
.cell:last-child {
  border-right: 0;
}
.level {
  width: 100%;
  border-top: 1px solid #b8c8b8;
  background: #00be00;
}
.level.blue {
  background: #0000be;
}
.scale {
  width: 13px;
  padding-left: 2px;
}
.info {
  width: 100%;
  height: 145px;
  padding: 4px 4px 0 4px;
  table-layout: fixed;
  border-spacing: 0 1px;
  color: #b8b8b8;
  font: 11px/11px "Liberation Sans", sans-serif;
}
.info th {
  width: 61px;
  padding: 0;
  font-weight: 400;
  text-align: left;
  white-space: nowrap;
}
.info td {
  padding: 0;
  background: #404040;
  text-align: right;
}
.info .fix {
  color: #14d814;
}
.dop {
  display: flex;
}
.dop-value {
  display: flex;
  flex: 1;
}
.dop-value i {
  width: 4px;
  height: 10px;
  background: #14b814;
}
.info .strip-cell {
  background: #000;
}
.strip {
  display: flex;
  justify-content: space-between;
  width: 88px;
}
.strip i {
  width: 2px;
  height: 11px;
  background: #00be00;
}
.strip i.blue {
  background: #0000be;
}
.status {
  display: flex;
  gap: 2px;
  height: 17px;
  border-top: 1px solid #e0e0e0;
  background: #f0f0f0;
  overflow: hidden;
}
.ready {
  flex: 1;
  margin-left: -3px;
}
.cell-s {
  display: flex;
  align-items: center;
  height: 16px;
  padding-left: 2px;
  border-top: 1px solid #a0a0a0;
  border-left: 1px solid #a0a0a0;
  overflow: hidden;
  white-space: nowrap;
}
.cell-s svg {
  flex: none;
  width: 16px;
  height: 16px;
  margin-right: 2px;
}
.client {
  width: 221px;
  margin-right: 8px;
}
.mqtt {
  margin-right: 15px;
}
.generation {
  width: 114px;
}
.port {
  width: 103px;
}
.file {
  width: 125px;
}
.time {
  width: 45px;
}
.cell-s.lamp {
  width: 19px;
}
.lamp svg {
  width: 10px;
  height: 10px;
}
</style>
